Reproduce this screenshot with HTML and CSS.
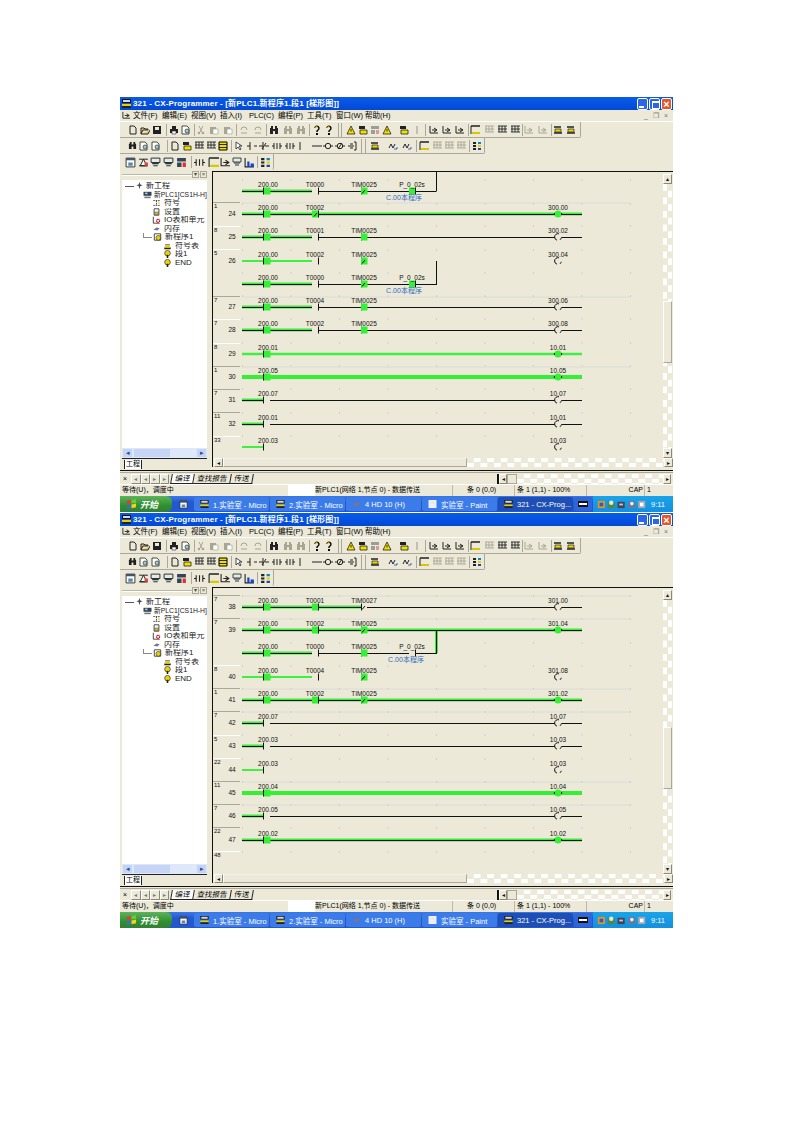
FILE: index.html
```html
<!DOCTYPE html>
<html lang="zh">
<head>
<meta charset="utf-8">
<title>CX-Programmer</title>
<link rel="stylesheet" href="styles.css">
</head>
<body>
<svg class="defs" xmlns="http://www.w3.org/2000/svg">
  <symbol id="doc" viewBox="0 0 10 10"><path d="M2 1h4l2 2v6H2z" fill="none" stroke="currentColor"/></symbol>
  <symbol id="open" viewBox="0 0 10 10"><path d="M1 9V3h3l1 1h3v1H3L1 9h7l2-4" fill="#e8d070" stroke="currentColor"/></symbol>
  <symbol id="disk" viewBox="0 0 10 10"><path d="M1 1h8v8H1z" fill="currentColor"/><path d="M3 2h4v3H3z" fill="#ece9d8"/></symbol>
  <symbol id="print" viewBox="0 0 10 10"><path d="M3 1h4v3H3zM1 4h8v4H1z" fill="currentColor"/><path d="M3 6h4v3H3z" fill="#fff" stroke="currentColor" stroke-width=".6"/></symbol>
  <symbol id="prev" viewBox="0 0 10 10"><path d="M1 1h5l2 2v6H1z" fill="#fff" stroke="currentColor" stroke-width=".8"/><circle cx="6" cy="6" r="2" fill="#9cc" stroke="#333" stroke-width=".7"/></symbol>
  <symbol id="cut" viewBox="0 0 10 10"><path d="M3 1l3 6M7 1L4 7" fill="none" stroke="currentColor"/><circle cx="3" cy="8" r="1.3" fill="currentColor"/><circle cx="7" cy="8" r="1.3" fill="currentColor"/></symbol>
  <symbol id="paste" viewBox="0 0 10 10"><path d="M1 2h6v7H1z" fill="currentColor"/><path d="M4 4h5v5H4z" fill="#fff" stroke="currentColor" stroke-width=".7"/></symbol>
  <symbol id="undo" viewBox="0 0 10 10"><path d="M2 8h6M2 5a3 3 0 0 1 6 0" fill="none" stroke="currentColor"/></symbol>
  <symbol id="bino" viewBox="0 0 10 10"><path d="M1 3h3v6H1zM6 3h3v6H6zM2 1h2v2H2zM6 1h2v2H6zM4 4h2v2H4z" fill="currentColor"/></symbol>
  <symbol id="help" viewBox="0 0 10 10"><path d="M3 3a2 2 0 1 1 3 2L5 6v1" fill="none" stroke="#000" stroke-width="1.4"/><path d="M3 2.5a2 2 0 0 1 3 0" fill="none" stroke="#e8d800"/><path d="M4 8h2v2H4z"/></symbol>
  <symbol id="warn" viewBox="0 0 10 10"><path d="M5 1l4 8H1z" fill="#f0e000" stroke="#222" stroke-width=".8"/><path d="M4.6 4h.8v2.5h-.8z"/></symbol>
  <symbol id="ychk" viewBox="0 0 10 10"><path d="M1 1h6v3H1z" fill="currentColor"/><path d="M2 5h7v4H2z" fill="#f0e000" stroke="#222" stroke-width=".8"/></symbol>
  <symbol id="lad" viewBox="0 0 10 10"><path d="M1 1v7h8M3 5h5M5 3l3 2-3 2" fill="none" stroke="currentColor"/></symbol>
  <symbol id="tab" viewBox="0 0 10 10"><path d="M1 1h9M1 4h9M1 7h9M2 1v6M5 1v6M8 1v6" fill="none" stroke="currentColor" stroke-width=".9"/></symbol>
  <symbol id="tabY" viewBox="0 0 10 10"><path d="M1 1h9" stroke="#222" stroke-width="1.4"/><path d="M1 1v8" stroke="#222"/><path d="M2 8h8" stroke="#d8c800" stroke-width="2"/></symbol>
  <symbol id="sel" viewBox="0 0 10 10"><path d="M1 1h8v8H1z" fill="#f0e000" stroke="#000"/><path d="M1 3.500h8M1 6.500h8" stroke="#000" stroke-width=".8"/></symbol>
  <symbol id="point" viewBox="0 0 10 10"><path d="M2 1v7l2-2 2 3 1-1-2-3h3z" fill="#fff" stroke="#222" stroke-width=".8"/></symbol>
  <symbol id="no" viewBox="0 0 10 10"><path d="M0 5h3M7 5h3M3 1v8" stroke="#222" fill="none"/></symbol>
  <symbol id="nc" viewBox="0 0 10 10"><path d="M0 5h4M6 5h4M4 1v8M7 2L3 8" stroke="#222" fill="none"/></symbol>
  <symbol id="or" viewBox="0 0 10 10"><path d="M0 5h2M8 5h2M2 2v6M5 2v6M8 2v6" stroke="#222" fill="none"/></symbol>
  <symbol id="vert" viewBox="0 0 10 10"><path d="M5 1v8" stroke="#222"/></symbol>
  <symbol id="horz" viewBox="0 0 10 10"><path d="M0 5h10" stroke="#222"/></symbol>
  <symbol id="coil" viewBox="0 0 10 10"><path d="M0 5h2M8 5h2" stroke="#222"/><circle cx="5" cy="5" r="2.700" fill="none" stroke="#222"/></symbol>
  <symbol id="coiln" viewBox="0 0 10 10"><path d="M0 5h2M8 5h2M3 8l4-6" stroke="#222"/><circle cx="5" cy="5" r="2.700" fill="none" stroke="#222"/></symbol>
  <symbol id="inst" viewBox="0 0 10 10"><path d="M7 1h2v8H7M1 5h6M3 3h3M3 7h3" fill="none" stroke="#222"/></symbol>
  <symbol id="run" viewBox="0 0 10 10"><path d="M1 2h7M1 8h8" stroke="#222" stroke-width="1.300"/><path d="M2 4h6v3H2z" fill="#e8d800" stroke="#222" stroke-width=".7"/></symbol>
  <symbol id="wave" viewBox="0 0 10 10"><path d="M1 7l2-4 2 4 2-4" fill="none" stroke="#223"/><path d="M6 8h3V6" stroke="#36c" fill="none"/></symbol>
  <symbol id="grid" viewBox="0 0 10 10"><path d="M1 1h3v2H1zM1 4h3v2H1zM1 7h3v2H1z" fill="#222"/><path d="M6 1h3v2H6z" fill="#08c"/><path d="M6 4h3v2H6z" fill="#e8d000"/><path d="M6 7h3v2H6z" fill="#24a"/></symbol>
  <symbol id="win" viewBox="0 0 10 10"><path d="M1 1h8v8H1z" fill="#fff" stroke="#222" stroke-width=".8"/><path d="M1 1h8v2H1z" fill="#456"/><path d="M3 5h4v3H3z" fill="#58a"/></symbol>
  <symbol id="win2" viewBox="0 0 10 10"><path d="M1 2h8M1 8h8M5 2L2 8h6z" fill="#fff" stroke="#222" stroke-width=".9"/><path d="M6 5h3v3H6z" fill="#d44"/></symbol>
  <symbol id="win3" viewBox="0 0 10 10"><path d="M1 1h8v4H1z" fill="#ece9d8" stroke="#234" stroke-width=".9"/><path d="M2 6h6M3 8h4" stroke="#234"/></symbol>
  <symbol id="gear" viewBox="0 0 10 10"><path d="M1 1h8v3H1zM1 5h4v4H1z" fill="#345"/><path d="M6 5h3v4H6z" fill="#d33"/></symbol>
  <symbol id="chart" viewBox="0 0 10 10"><path d="M1 1v8h8" stroke="#222" fill="none"/><path d="M3 4h2v5H3zM6 6h3v3H6z" fill="#14c"/></symbol>

  <symbol id="tbar1">
    <use href="#doc" x="8" y="3" width="10" height="10" class="ink"/><use href="#open" x="20" y="3" width="10" height="10" class="ink"/><use href="#disk" x="32" y="3" width="10" height="10" class="ink"/>
    <rect x="46" y="2" width="1" height="12" class="sep"/>
    <use href="#print" x="49" y="3" width="10" height="10" class="ink"/><use href="#prev" x="61" y="3" width="10" height="10" class="ink"/>
    <rect x="74" y="2" width="1" height="12" class="sep"/>
    <use href="#cut" x="76" y="3" width="10" height="10" class="dim"/><use href="#paste" x="89" y="3" width="10" height="10" class="dim"/><use href="#paste" x="103" y="3" width="10" height="10" class="dim"/>
    <rect x="116" y="2" width="1" height="12" class="sep"/>
    <use href="#undo" x="119" y="3" width="10" height="10" class="dim"/><use href="#undo" x="133" y="3" width="10" height="10" class="dim"/>
    <rect x="146" y="2" width="1" height="12" class="sep"/>
    <use href="#bino" x="149" y="3" width="10" height="10" class="ink"/><use href="#bino" x="163" y="3" width="10" height="10" class="dim"/><use href="#bino" x="176" y="3" width="10" height="10" class="dim"/>
    <rect x="189" y="2" width="1" height="12" class="sep"/>
    <use href="#help" x="192" y="3" width="10" height="10"/><use href="#help" x="204" y="3" width="10" height="10"/>
    <rect x="218" y="1" width="1" height="14" class="sep"/><rect x="221" y="1" width="1" height="14" class="sep"/>
    <use href="#warn" x="226" y="3" width="10" height="10"/><use href="#ychk" x="238" y="3" width="10" height="10" class="ink"/><use href="#gear" x="250" y="3" width="10" height="10" class="faint"/><use href="#warn" x="262" y="3" width="10" height="10"/>
    <use href="#ychk" x="279" y="3" width="10" height="10" class="ink"/><use href="#vert" x="292" y="3" width="10" height="10" class="dimstroke"/>
    <rect x="305" y="2" width="1" height="12" class="sep"/>
    <use href="#lad" x="309" y="3" width="10" height="10" class="ink"/><use href="#lad" x="322" y="3" width="10" height="10" class="ink"/><use href="#lad" x="335" y="3" width="10" height="10" class="ink"/>
    <rect x="348" y="2" width="1" height="12" class="sep"/>
    <use href="#tabY" x="350" y="3" width="10" height="10"/><use href="#tab" x="364" y="3" width="10" height="10" class="dim"/><use href="#tab" x="377" y="3" width="10" height="10" class="ink"/><use href="#tab" x="390" y="3" width="10" height="10" class="ink"/>
    <rect x="402" y="2" width="1" height="12" class="sep"/>
    <use href="#lad" x="404" y="3" width="10" height="10" class="dim"/><use href="#lad" x="418" y="3" width="10" height="10" class="dim"/>
    <rect x="431" y="2" width="1" height="12" class="sep"/>
    <use href="#run" x="433" y="3" width="10" height="10"/><use href="#run" x="446" y="3" width="10" height="10"/>
  </symbol>
  <symbol id="tbar2">
    <use href="#bino" x="8" y="3" width="9" height="9" class="ink"/><use href="#prev" x="19" y="3" width="10" height="10" class="ink"/><use href="#prev" x="31" y="3" width="10" height="10" class="ink"/>
    <rect x="47" y="2" width="1" height="12" class="sep"/>
    <use href="#doc" x="50" y="3" width="10" height="10" class="ink"/><use href="#ychk" x="62" y="3" width="10" height="10" class="ink"/><use href="#tab" x="74" y="3" width="10" height="10" class="ink"/><use href="#tab" x="86" y="3" width="10" height="10" class="ink"/><use href="#sel" x="98" y="3" width="10" height="10"/>
    <rect x="111" y="2" width="1" height="12" class="sep"/>
    <use href="#point" x="114" y="3" width="10" height="10"/><use href="#no" x="127" y="3" width="10" height="10"/><use href="#nc" x="139" y="3" width="10" height="10"/><use href="#or" x="152" y="3" width="10" height="10"/><use href="#or" x="165" y="3" width="10" height="10"/><use href="#vert" x="175" y="3" width="10" height="10"/><use href="#horz" x="192" y="3" width="10" height="10"/><use href="#coil" x="203" y="3" width="10" height="10"/><use href="#coiln" x="215" y="3" width="10" height="10"/><use href="#inst" x="227" y="3" width="10" height="10"/>
    <rect x="241" y="1" width="1" height="14" class="sep"/><rect x="245" y="1" width="1" height="14" class="sep"/>
    <use href="#run" x="250" y="3" width="10" height="10"/><use href="#wave" x="268" y="3" width="10" height="10"/><use href="#wave" x="282" y="3" width="10" height="10"/>
    <rect x="296" y="2" width="1" height="12" class="sep"/>
    <use href="#tabY" x="299" y="3" width="10" height="10"/><use href="#tab" x="312" y="3" width="10" height="10" class="dim"/><use href="#tab" x="324" y="3" width="10" height="10" class="dim"/><use href="#tab" x="336" y="3" width="10" height="10" class="dim"/>
    <rect x="349" y="2" width="1" height="12" class="sep"/>
    <use href="#grid" x="352" y="3" width="10" height="10"/>
  </symbol>
  <symbol id="tbar3">
    <use href="#win" x="5" y="3" width="11" height="11"/><use href="#win2" x="18" y="3" width="11" height="11"/><use href="#win3" x="30" y="3" width="11" height="11"/><use href="#win3" x="43" y="3" width="11" height="11"/><use href="#gear" x="56" y="3" width="11" height="11"/>
    <rect x="71" y="2" width="1" height="12" class="sep"/>
    <use href="#or" x="74" y="3" width="11" height="11"/><use href="#tabY" x="88" y="3" width="11" height="11"/><use href="#lad" x="100" y="3" width="11" height="11" class="ink"/><use href="#win3" x="112" y="3" width="10" height="10"/><use href="#chart" x="124" y="3" width="11" height="11"/>
    <rect x="137" y="2" width="1" height="12" class="sep"/>
    <use href="#grid" x="140" y="3" width="11" height="11"/>
  </symbol>

  <symbol id="appicon" viewBox="0 0 11 11"><path d="M1 1h9v4H1z" fill="#111"/><path d="M2 2h7v2H2z" fill="#d8d8d8"/><path d="M1 6h9v2H1z" fill="#e8d000"/><path d="M1 8h9v2H1z" fill="#222"/></symbol>
  <symbol id="t-root" viewBox="0 0 10 10"><path d="M5 0l1 3 3 1-3 1-1 4-1-4-3-1 3-1z" fill="#444"/></symbol>
  <symbol id="t-plc" viewBox="0 0 10 10"><path d="M0 1h10v5H0z" fill="#345"/><path d="M1 7h8v2H1z" fill="#777"/><path d="M2 2h3v2H2z" fill="#bcd"/></symbol>
  <symbol id="t-sym" viewBox="0 0 10 10"><path d="M1 2h8M1 8h8M5 2v6" stroke="#222" stroke-dasharray="2 1"/><path d="M7 4h2v2H7z" fill="#e8d000"/></symbol>
  <symbol id="t-set" viewBox="0 0 10 10"><path d="M2 1h6v8H2z" fill="none" stroke="#222"/><path d="M3 5h4v3H3z" fill="#e8d000" stroke="#222" stroke-width=".5"/></symbol>
  <symbol id="t-io" viewBox="0 0 10 10"><path d="M1 1v8h8" stroke="#222" fill="none"/><circle cx="7" cy="6" r="2" fill="none" stroke="#d00" stroke-width="1.200"/></symbol>
  <symbol id="t-mem" viewBox="0 0 10 10"><path d="M1 6l4-3 4 1-3 3z" fill="#778"/></symbol>
  <symbol id="t-prog" viewBox="0 0 10 10"><path d="M1 1h8v8H1z" fill="#fff" stroke="#222"/><circle cx="6" cy="6" r="3" fill="#e8d000" stroke="#222" stroke-width=".7"/></symbol>
  <symbol id="t-tbl" viewBox="0 0 10 10"><path d="M2 3h6v1H2zM1 7h8v2H1z" fill="#222"/><path d="M2 4h6v3H2z" fill="#e8d000"/></symbol>
  <symbol id="t-sec" viewBox="0 0 10 10"><circle cx="5" cy="4" r="3.500" fill="#e8d800" stroke="#222" stroke-width=".8"/><path d="M4 6h2v4H4z" fill="#222"/></symbol>
  <symbol id="flag" viewBox="0 0 12 12"><path d="M1 2l4-1v4l-4 1z" fill="#e33"/><path d="M6 1l5-1v4l-5 1z" fill="#6c3"/><path d="M1 7l4-1v4l-4 1z" fill="#27d"/><path d="M6 6l5-1v4l-5 1z" fill="#fc2"/></symbol>
  <symbol id="tray" viewBox="0 0 58 12">
    <path d="M2 2h8v8H2z" fill="#e89020"/><path d="M4 4h4v4H4z" fill="#2060d0"/><path d="M13 3h8v7h-8z" fill="#4a8a4a"/><circle cx="17" cy="4" r="2.500" fill="#e4e4e4"/><path d="M24 3h8v7h-8z" fill="#445"/><path d="M26 5h4v2h-4z" fill="#c8c8e8"/><circle cx="40" cy="6" r="4" fill="#778"/><circle cx="40" cy="5" r="2" fill="#eee"/><path d="M47 2h8v8h-8z" fill="#a8a8b0"/><path d="M49 4h4v4h-4z" fill="#fff"/>
  </symbol>
  <g id="c"><rect x="0" y="-3.500" width="1" height="7" class="kf"/></g>
  <g id="s"><rect x="0" y="-3.500" width="6.500" height="7" class="gf"/></g>
  <g id="on"><circle r="3.600" class="gf"/><path d="M-3.600 -1v2M3.600 -1v2" class="k"/></g>
  <g id="off"><circle r="3.400" fill="#ece9d8"/><path d="M1 -3.200A3.400 3.400 0 0 0 -3.400 0A3.400 3.400 0 0 0 -1 3.200M2 2.800A3.400 3.400 0 0 0 3.300 .8" fill="none" stroke="#111"/></g>
  <g id="sl"><path d="M0 2.500l3-3.500" class="k"/></g>
</svg>

<main class="page">
  <section class="window">
    <header class="title"><svg class="ticon"><use href="#appicon"/></svg><span class="ttext">321 - CX-Programmer - [新PLC1.新程序1.段1 [梯形图]]</span><span class="wbtns"><i class="wb min"></i><i class="wb max"></i><i class="wb close"></i></span></header>
    <nav class="menu"><svg class="micon"><use href="#lad" class="ink"/></svg><span class="m">文件(F)</span><span class="m">编辑(E)</span><span class="m">视图(V)</span><span class="m">插入(I)</span><span class="m">PLC(C)</span><span class="m">编程(P)</span><span class="m">工具(T)</span><span class="m">窗口(W)</span><span class="m">帮助(H)</span><span class="mbtns"><i class="mb">_</i><i class="mb">❐</i><i class="mb">×</i></span></nav>
    <div class="tb"><svg class="tb1"><use href="#tbar1"/></svg></div>
    <div class="tb"><svg class="tb2"><use href="#tbar2"/></svg></div>
    <div class="tb last"><svg class="tb3"><use href="#tbar3"/></svg></div>
    <div class="body">
      <aside class="side">
        <div class="sidehead"><i class="sb">▾</i><i class="sb">×</i></div>
        <ul class="tree">
          <li class="t0"><svg class="ti"><use href="#t-root"/></svg>新工程</li>
          <li class="t1"><svg class="ti"><use href="#t-plc"/></svg>新PLC1[CS1H-H]</li>
          <li class="t2"><svg class="ti"><use href="#t-sym"/></svg>符号</li>
          <li class="t2"><svg class="ti"><use href="#t-set"/></svg>设置</li>
          <li class="t2"><svg class="ti"><use href="#t-io"/></svg>IO表和单元</li>
          <li class="t2"><svg class="ti"><use href="#t-mem"/></svg>内存</li>
          <li class="t2 br"><svg class="ti"><use href="#t-prog"/></svg>新程序1</li>
          <li class="t3"><svg class="ti"><use href="#t-tbl"/></svg>符号表</li>
          <li class="t3"><svg class="ti"><use href="#t-sec"/></svg>段1</li>
          <li class="t3"><svg class="ti"><use href="#t-sec"/></svg>END</li>
        </ul>
        <div class="tscroll"><i class="ta">◂</i><i class="tt"></i><i class="ta end">▸</i></div>
        <div class="stab"><span class="stabin">工程</span></div>
      </aside>
      <div class="main">
        <div class="mainrow">
          <svg class="ladder" viewBox="213 172 450 286">
            <g class="gutter">
              <path d="M213 202.500h27M213 296.500h27M213 366.500h27M213 389.500h27M213 412.500h27" class="lineg"/>
              <path d="M213 226.500h27M213 249.500h27M213 319.500h27M213 343.500h27M213 436.500h27" class="linew"/>
              <path d="M242 203h389M242 297h389M242 367h389" class="linel"/>
              <path d="M242 180h389M242 204h389M242 226h389M242 250h389M242 273h389M242 296h389M242 319h389M242 343h389M242 366h389M242 389h389M242 413h389M242 436h389" class="ticks"/>
              <text x="232" y="216">24</text><text x="232" y="239">25</text><text x="232" y="263">26</text><text x="232" y="309">27</text><text x="232" y="332">28</text><text x="232" y="356">29</text><text x="232" y="379">30</text><text x="232" y="402">31</text><text x="232" y="426">32</text>
              <text x="214" y="208" class="st">1</text><text x="214" y="232" class="st">8</text><text x="214" y="255" class="st">5</text><text x="214" y="302" class="st">7</text><text x="214" y="325" class="st">7</text><text x="214" y="349" class="st">8</text><text x="214" y="372" class="st">1</text><text x="214" y="395" class="st">7</text><text x="214" y="418" class="st">11</text><text x="214" y="442" class="st">33</text>
            </g>
            <path d="M436.500 172v19" class="k"/>
            <path d="M242 191h70M242 214h340M242 237h70M242 284h70M242 307h70M242 330h70" class="g3"/>
            <path d="M242 261h70" class="g2"/><path d="M242 354h340" class="g25"/><path d="M242 377h340" class="g4"/>
            <path d="M242 400h21M242 424h21" class="g3"/><path d="M242 447h21" class="g2"/>
            <path d="M242 191.500h70M318 191.500h118.500M242 214.500h340M242 237.500h70M318 237.500h264M242 284.500h70M318 284.500h119M242 307.500h70M318 307.500h264M242 330.500h70M318 330.500h264M242 400.500h21M270 400.500h312M242 424.500h21M270 424.500h312M436.500 261v24" class="k"/>
            <use href="#c" x="263" y="191"/><use href="#s" x="264" y="191"/><use href="#c" x="318" y="191"/><use href="#c" x="361" y="191"/><use href="#s" x="361" y="191"/><use href="#sl" x="362" y="191"/><use href="#s" x="409" y="191"/><use href="#c" x="415" y="191"/>
            <use href="#c" x="263" y="214"/><use href="#s" x="264" y="214"/><use href="#s" x="312" y="214"/><use href="#sl" x="314" y="214"/><use href="#c" x="318" y="214"/><use href="#on" x="558" y="214"/>
            <use href="#c" x="263" y="237"/><use href="#s" x="264" y="237"/><use href="#c" x="318" y="237"/><use href="#c" x="361" y="237"/><use href="#s" x="361" y="237"/><use href="#off" x="558" y="237"/>
            <use href="#c" x="263" y="261"/><use href="#s" x="264" y="261"/><use href="#c" x="318" y="261"/><use href="#c" x="361" y="261"/><use href="#s" x="361" y="261"/><use href="#sl" x="362" y="261"/><use href="#off" x="558" y="261"/>
            <use href="#c" x="263" y="284"/><use href="#s" x="264" y="284"/><use href="#c" x="318" y="284"/><use href="#c" x="361" y="284"/><use href="#s" x="361" y="284"/><use href="#sl" x="362" y="284"/><use href="#s" x="409" y="284"/><use href="#c" x="415" y="284"/>
            <use href="#c" x="263" y="307"/><use href="#s" x="264" y="307"/><use href="#c" x="318" y="307"/><use href="#c" x="361" y="307"/><use href="#s" x="361" y="307"/><use href="#off" x="558" y="307"/>
            <use href="#c" x="263" y="330"/><use href="#s" x="264" y="330"/><use href="#c" x="318" y="330"/><use href="#c" x="361" y="330"/><use href="#s" x="361" y="330"/><use href="#off" x="558" y="330"/>
            <use href="#c" x="263" y="354"/><use href="#s" x="264" y="354"/><use href="#on" x="558" y="354"/>
            <use href="#c" x="263" y="377"/><use href="#s" x="264" y="377"/><use href="#on" x="558" y="377"/>
            <use href="#c" x="263" y="400"/><use href="#off" x="558" y="400"/>
            <use href="#c" x="263" y="424"/><use href="#off" x="558" y="424"/>
            <use href="#c" x="263" y="447"/><use href="#off" x="558" y="447"/>
            <g class="lb">
              <text x="268" y="187">200.00</text><text x="315" y="187">T0000</text><text x="364" y="187">TIM0025</text><text x="412" y="187">P_0_02s</text>
              <text x="268" y="210">200.00</text><text x="315" y="210">T0002</text><text x="558" y="210">300.00</text>
              <text x="268" y="233">200.00</text><text x="315" y="233">T0001</text><text x="364" y="233">TIM0025</text><text x="558" y="233">300.02</text>
              <text x="268" y="257">200.00</text><text x="315" y="257">T0002</text><text x="364" y="257">TIM0025</text><text x="558" y="257">300.04</text>
              <text x="268" y="280">200.00</text><text x="315" y="280">T0000</text><text x="364" y="280">TIM0025</text><text x="412" y="280">P_0_02s</text>
              <text x="268" y="303">200.00</text><text x="315" y="303">T0004</text><text x="364" y="303">TIM0025</text><text x="558" y="303">300.06</text>
              <text x="268" y="326">200.00</text><text x="315" y="326">T0002</text><text x="364" y="326">TIM0025</text><text x="558" y="326">300.08</text>
              <text x="268" y="350">200.01</text><text x="558" y="350">10.01</text>
              <text x="268" y="373">200.05</text><text x="558" y="373">10.05</text>
              <text x="268" y="396">200.07</text><text x="558" y="396">10.07</text>
              <text x="268" y="420">200.01</text><text x="558" y="420">10.01</text>
              <text x="268" y="443">200.03</text><text x="558" y="443">10.03</text>
            </g>
            <text x="404" y="200" class="cm">C.00本程序</text><text x="404" y="293" class="cm">C.00本程序</text>
          </svg>
          <div class="vs"><i class="sbtn">▴</i><div class="vtrack v1"><i class="vthumb"></i></div><i class="sbtn">▾</i></div>
        </div>
        <div class="hs"><i class="sbtn">◂</i><i class="hthumb"></i><div class="check"></div><i class="sbtn">▸</i></div>
      </div>
    </div>
    <div class="output"><span class="ox">×</span><span class="onav"><i class="ob">◂</i><i class="ob">◂</i><i class="ob">▸</i><i class="ob">▸</i></span><span class="otabs"><b class="otab act">编译</b><b class="otab">查找报告</b><b class="otab">传送</b></span><span class="oscroll"><i class="sbtn">◂</i><i class="othumb"></i><div class="check"></div><i class="sbtn">▸</i></span></div>
    <footer class="status"><span class="s0">等待(U)，调度中</span><span class="s1">新PLC1(网络 1,节点 0) - 数据传送</span><span class="s2">条 0 (0,0)</span><span class="s3">条 1 (1,1) - 100%</span><span class="s4">CAP</span><span class="s5">1</span></footer>
    <div class="taskbar"><span class="start"><svg class="flag"><use href="#flag"/></svg>开始</span><span class="ql"><svg class="qli"><use href="#win"/></svg></span><span class="tk"><svg class="tki"><use href="#appicon"/></svg>1.实验室 - Micro</span><span class="tk"><svg class="tki"><use href="#appicon"/></svg>2.实验室 - Micro</span><span class="tk"><svg class="tki"><use href="#t-mem"/></svg>4 HD 10 (H)</span><span class="tk"><svg class="tki"><use href="#disk"/></svg>实验室 - Paint</span><span class="tk act"><svg class="tki"><use href="#appicon"/></svg>321 - CX-Prog...</span><span class="tk small"><i class="tkbox"></i></span><span class="trayb"><svg class="tri"><use href="#tray"/></svg><span class="clock">9:11</span></span></div>
  </section>

  <section class="window">
    <header class="title"><svg class="ticon"><use href="#appicon"/></svg><span class="ttext">321 - CX-Programmer - [新PLC1.新程序1.段1 [梯形图]]</span><span class="wbtns"><i class="wb min"></i><i class="wb max"></i><i class="wb close"></i></span></header>
    <nav class="menu"><svg class="micon"><use href="#lad" class="ink"/></svg><span class="m">文件(F)</span><span class="m">编辑(E)</span><span class="m">视图(V)</span><span class="m">插入(I)</span><span class="m">PLC(C)</span><span class="m">编程(P)</span><span class="m">工具(T)</span><span class="m">窗口(W)</span><span class="m">帮助(H)</span><span class="mbtns"><i class="mb">_</i><i class="mb">❐</i><i class="mb">×</i></span></nav>
    <div class="tb"><svg class="tb1"><use href="#tbar1"/></svg></div>
    <div class="tb"><svg class="tb2"><use href="#tbar2"/></svg></div>
    <div class="tb last"><svg class="tb3"><use href="#tbar3"/></svg></div>
    <div class="body">
      <aside class="side">
        <div class="sidehead"><i class="sb">▾</i><i class="sb">×</i></div>
        <ul class="tree">
          <li class="t0"><svg class="ti"><use href="#t-root"/></svg>新工程</li>
          <li class="t1"><svg class="ti"><use href="#t-plc"/></svg>新PLC1[CS1H-H]</li>
          <li class="t2"><svg class="ti"><use href="#t-sym"/></svg>符号</li>
          <li class="t2"><svg class="ti"><use href="#t-set"/></svg>设置</li>
          <li class="t2"><svg class="ti"><use href="#t-io"/></svg>IO表和单元</li>
          <li class="t2"><svg class="ti"><use href="#t-mem"/></svg>内存</li>
          <li class="t2 br"><svg class="ti"><use href="#t-prog"/></svg>新程序1</li>
          <li class="t3"><svg class="ti"><use href="#t-tbl"/></svg>符号表</li>
          <li class="t3"><svg class="ti"><use href="#t-sec"/></svg>段1</li>
          <li class="t3"><svg class="ti"><use href="#t-sec"/></svg>END</li>
        </ul>
        <div class="tscroll"><i class="ta">◂</i><i class="tt"></i><i class="ta end">▸</i></div>
        <div class="stab"><span class="stabin">工程</span></div>
      </aside>
      <div class="main">
        <div class="mainrow">
          <svg class="ladder" viewBox="213 172 450 286">
            <g class="gutter">
              <path d="M213 179.500h27M213 202.500h27M213 272.500h27M213 295.500h27M213 365.500h27M213 388.500h27M213 411.500h27" class="lineg"/>
              <path d="M213 249.500h27M213 319.500h27M213 342.500h27M213 435.500h27" class="linew"/>
              <path d="M242 180h389M242 203h389M242 273h389M242 296h389M242 366h389M242 389h389" class="linel"/>
              <path d="M242 180h389M242 203h389M242 227h389M242 250h389M242 273h389M242 296h389M242 319h389M242 343h389M242 366h389M242 389h389M242 412h389M242 436h389" class="ticks"/>
              <text x="232" y="193">38</text><text x="232" y="216">39</text><text x="232" y="263">40</text><text x="232" y="286">41</text><text x="232" y="309">42</text><text x="232" y="332">43</text><text x="232" y="356">44</text><text x="232" y="379">45</text><text x="232" y="402">46</text><text x="232" y="426">47</text>
              <text x="214" y="185" class="st">7</text><text x="214" y="208" class="st">7</text><text x="214" y="255" class="st">8</text><text x="214" y="278" class="st">1</text><text x="214" y="301" class="st">7</text><text x="214" y="325" class="st">5</text><text x="214" y="348" class="st">22</text><text x="214" y="371" class="st">11</text><text x="214" y="394" class="st">7</text><text x="214" y="417" class="st">22</text><text x="214" y="441" class="st">48</text>
            </g>
            <path d="M242 191h119M242 214h340M436.500 214v23M242 237h70M242 284h340M242 307h21M242 330h21M242 400h21M242 424h340" class="g3"/>
            <path d="M242 261h70M242 354h21" class="g2"/><path d="M242 377h340" class="g4"/>
            <path d="M242 191.500h119M367 191.500h215M242 214.500h340M436.500 214v23M242 237.500h70M318 237.500h91M415 237.500h22M242 284.500h340M242 307.500h21M270 307.500h312M242 330.500h21M270 330.500h312M242 400.500h21M270 400.500h312M242 424.500h340" class="k"/>
            <use href="#c" x="263" y="191"/><use href="#s" x="264" y="191"/><use href="#s" x="312" y="191"/><use href="#c" x="318" y="191"/><use href="#c" x="361" y="191"/><use href="#sl" x="362" y="191"/><use href="#off" x="558" y="191"/>
            <use href="#c" x="263" y="214"/><use href="#s" x="264" y="214"/><use href="#s" x="312" y="214"/><use href="#c" x="318" y="214"/><use href="#c" x="361" y="214"/><use href="#s" x="361" y="214"/><use href="#sl" x="362" y="214"/><use href="#on" x="558" y="214"/>
            <use href="#c" x="263" y="237"/><use href="#s" x="264" y="237"/><use href="#c" x="318" y="237"/><use href="#c" x="361" y="237"/><use href="#s" x="361" y="237"/><use href="#c" x="415" y="237"/>
            <use href="#c" x="263" y="261"/><use href="#s" x="264" y="261"/><use href="#c" x="318" y="261"/><use href="#c" x="361" y="261"/><use href="#s" x="361" y="261"/><use href="#sl" x="362" y="261"/><use href="#off" x="558" y="261"/>
            <use href="#c" x="263" y="284"/><use href="#s" x="264" y="284"/><use href="#s" x="312" y="284"/><use href="#c" x="318" y="284"/><use href="#c" x="361" y="284"/><use href="#s" x="361" y="284"/><use href="#sl" x="362" y="284"/><use href="#on" x="558" y="284"/>
            <use href="#c" x="263" y="307"/><use href="#off" x="558" y="307"/>
            <use href="#c" x="263" y="330"/><use href="#off" x="558" y="330"/>
            <use href="#c" x="263" y="354"/><use href="#off" x="558" y="354"/>
            <use href="#c" x="263" y="377"/><use href="#s" x="264" y="377"/><use href="#on" x="558" y="377"/>
            <use href="#c" x="263" y="400"/><use href="#off" x="558" y="400"/>
            <use href="#c" x="263" y="424"/><use href="#s" x="264" y="424"/><use href="#on" x="558" y="424"/>
            <g class="lb">
              <text x="268" y="187">200.00</text><text x="315" y="187">T0001</text><text x="364" y="187">TIM0027</text><text x="558" y="187">301.00</text>
              <text x="268" y="210">200.00</text><text x="315" y="210">T0002</text><text x="364" y="210">TIM0025</text><text x="558" y="210">301.04</text>
              <text x="268" y="233">200.00</text><text x="315" y="233">T0000</text><text x="364" y="233">TIM0025</text><text x="412" y="233">P_0_02s</text>
              <text x="268" y="257">200.00</text><text x="315" y="257">T0004</text><text x="364" y="257">TIM0025</text><text x="558" y="257">301.08</text>
              <text x="268" y="280">200.00</text><text x="315" y="280">T0002</text><text x="364" y="280">TIM0025</text><text x="558" y="280">301.02</text>
              <text x="268" y="303">200.07</text><text x="558" y="303">10.07</text>
              <text x="268" y="326">200.03</text><text x="558" y="326">10.03</text>
              <text x="268" y="350">200.03</text><text x="558" y="350">10.03</text>
              <text x="268" y="373">200.04</text><text x="558" y="373">10.04</text>
              <text x="268" y="396">200.05</text><text x="558" y="396">10.05</text>
              <text x="268" y="420">200.02</text><text x="558" y="420">10.02</text>
            </g>
            <text x="406" y="246" class="cm">C.00本程序</text>
          </svg>
          <div class="vs"><i class="sbtn">▴</i><div class="vtrack v2"><i class="vthumb"></i></div><i class="sbtn">▾</i></div>
        </div>
        <div class="hs"><i class="sbtn">◂</i><i class="hthumb"></i><div class="check"></div><i class="sbtn">▸</i></div>
      </div>
    </div>
    <div class="output"><span class="ox">×</span><span class="onav"><i class="ob">◂</i><i class="ob">◂</i><i class="ob">▸</i><i class="ob">▸</i></span><span class="otabs"><b class="otab act">编译</b><b class="otab">查找报告</b><b class="otab">传送</b></span><span class="oscroll"><i class="sbtn">◂</i><i class="othumb"></i><div class="check"></div><i class="sbtn">▸</i></span></div>
    <footer class="status"><span class="s0">等待(U)，调度中</span><span class="s1">新PLC1(网络 1,节点 0) - 数据传送</span><span class="s2">条 0 (0,0)</span><span class="s3">条 1 (1,1) - 100%</span><span class="s4">CAP</span><span class="s5">1</span></footer>
    <div class="taskbar"><span class="start"><svg class="flag"><use href="#flag"/></svg>开始</span><span class="ql"><svg class="qli"><use href="#win"/></svg></span><span class="tk"><svg class="tki"><use href="#appicon"/></svg>1.实验室 - Micro</span><span class="tk"><svg class="tki"><use href="#appicon"/></svg>2.实验室 - Micro</span><span class="tk"><svg class="tki"><use href="#t-mem"/></svg>4 HD 10 (H)</span><span class="tk"><svg class="tki"><use href="#disk"/></svg>实验室 - Paint</span><span class="tk act"><svg class="tki"><use href="#appicon"/></svg>321 - CX-Prog...</span><span class="tk small"><i class="tkbox"></i></span><span class="trayb"><svg class="tri"><use href="#tray"/></svg><span class="clock">9:11</span></span></div>
  </section>
</main>
</body>
</html>
```
FILE: styles.css
```css
* { box-sizing: border-box; }
html, body { margin: 0; padding: 0; background: #fff; }
body { font-family: "Liberation Sans", "Noto Sans CJK SC", sans-serif; font-size: 8px; color: #000; }
i { font-style: normal; }
.defs { display: none; }
.page { width: 793px; height: 1122px; padding: 97px 0 0 120px; }
.window { width: 553px; height: 415px; margin-bottom: 1px; display: flex; flex-direction: column; background: #ece9d8; overflow: hidden; }

.title { height: 13px; flex: none; display: flex; align-items: center; padding: 0 1px; color: #fff; font-weight: 700; font-size: 8px; letter-spacing: .15px; white-space: nowrap; background: linear-gradient(#0a5ae8, #0553e2 50%, #0348d0); }
.ticon { width: 11px; height: 11px; margin-right: 1px; flex: none; }
.ttext { flex: 1; line-height: 13px; }
.wbtns { display: flex; gap: 1px; height: 12px; }
.wb { width: 11px; height: 12px; display: block; border: 1px solid #fff; border-radius: 2px; background: #2b66e6; }
.wb.min::after { content: ""; display: block; width: 5px; height: 2px; margin: 7px 0 0 1px; background: #fff; }
.wb.max::after { content: ""; display: block; width: 6px; height: 5px; margin: 2px 0 0 2px; border: 1px solid #fff; border-top-width: 2px; }
.wb.close { background: #e2582c; }
.wb.close::after { content: "×"; display: block; color: #fff; font-size: 11px; line-height: 10px; text-align: center; }

.menu { height: 12px; flex: none; display: flex; align-items: center; background: #ece9d8; border-bottom: 1px solid #fff; padding-left: 2px; font-size: 7.500px; white-space: nowrap; }
.micon { width: 9px; height: 9px; flex: none; margin-right: 2px; }
.m { width: 29px; flex: none; line-height: 11px; }
.mbtns { margin-left: auto; display: flex; gap: 2px; padding-right: 3px; color: #777; }
.mb { width: 8px; text-align: center; line-height: 10px; font-size: 7px; }

.tb { height: 16px; flex: none; display: flex; background: #ece9d8; }
.tb svg { display: block; height: 16px; border-right: 1px solid #aca899; border-bottom: 1px solid #aca899; border-bottom-right-radius: 2px; box-shadow: 0 1px 0 #fff; }
.tb1 { width: 461px; }
.tb2 { width: 365px; }
.tb3 { width: 154px; }
.tb.last svg { border-bottom: 0; box-shadow: none; }
.ink { color: #222; }
.dim { color: #a9a595; }
.faint { opacity: .45; }
.dimstroke { opacity: .4; }
.sep { fill: #aca899; }

.body { height: 300px; flex: none; display: flex; }
.side { width: 92px; flex: none; display: flex; flex-direction: column; padding: 1px 5px 3px 2px; }
.sidehead { height: 9px; flex: none; display: flex; justify-content: flex-end; gap: 1px; background: linear-gradient(#ece9d8 3px, #bdb9a6 3px, #bdb9a6 4px, #fff 4px, #fff 5px, #ece9d8 5px); }
.sb { width: 7px; height: 7px; border: 1px solid #aca899; background: #ece9d8; font-size: 6px; line-height: 5px; text-align: center; color: #444; }
.tree { flex: 1; margin: 0; padding: 0; list-style: none; background: #fff; font-size: 8px; }
.tree li { height: 8.500px; line-height: 8.500px; display: flex; align-items: center; white-space: nowrap; overflow: hidden; color: #222; }
.ti { width: 9px; height: 8px; flex: none; margin-right: 3px; }
.t0 { padding-left: 3px; margin-top: 2px; }
.t0::before { content: ""; flex: none; width: 9px; height: 1px; margin-right: 1px; background: #555; }
.t0 .ti { margin-right: 2px; }
.t1 { padding-left: 21px; font-size: 6.800px; }
.t1 .ti { margin-right: 2px; }
.t2 { padding-left: 30px; }
.t2.br { padding-left: 21px; }
.t2.br::before { content: ""; flex: none; width: 8px; height: 5px; margin: -5px 1px 0 0; border-left: 1px solid #888; border-bottom: 1px solid #888; }
.t3 { padding-left: 41px; }
.tscroll { height: 10px; flex: none; display: flex; align-items: center; background: #dfe8fb; padding: 1px; }
.ta { width: 9px; height: 8px; background: #c4d4f7; color: #2a4aa0; font-size: 7px; line-height: 7px; text-align: center; }
.tt { width: 36px; height: 8px; background: #c6d5f6; margin-left: 2px; }
.ta.end { margin-left: auto; }
.stab { height: 9px; flex: none; padding-left: 2px; border-top: 1px solid #222; }
.stabin { display: inline-block; width: 18px; height: 9px; line-height: 8px; background: #fff; border-left: 1px solid #222; border-right: 1px solid #222; text-align: center; font-size: 7px; }

.main { flex: 1; display: flex; flex-direction: column; height: 300px; border-top: 1px solid #ece9d8; }
.mainrow { display: flex; height: 287px; border-top: 1px solid #111; border-left: 1px solid #111; }
.ladder { width: 450px; height: 286px; display: block; background: #ece9d8; flex: none; }
.vs { width: 9px; flex: none; display: flex; flex-direction: column; margin-top: 2px; }
.vtrack { flex: 1; background: conic-gradient(#ece9d8 25%, #fff 0 50%, #ece9d8 0 75%, #fff 0) 0 0 / 9px 13.500px; display: flex; flex-direction: column; }
.v1 { padding-top: 117px; }
.v2 { padding-top: 127px; }
.vthumb { display: block; height: 62px; background: #ece9d8; border: 1px solid #aca899; border-left-color: #fff; border-top-color: #fff; }
.sbtn { display: block; width: 9px; height: 10px; flex: none; background: #ece9d8; border: 1px solid #8c8872; border-top-color: #fff; border-left-color: #fff; font-size: 6px; line-height: 8px; text-align: center; color: #111; }
.hs { display: flex; height: 9px; flex: none; padding-left: 1px; border-left: 1px solid #111; }
.hs .sbtn { width: 9px; height: 9px; }
.hthumb { display: block; width: 244px; height: 9px; background: #ece9d8; border: 1px solid #aca899; border-top-color: #f4f2e8; border-left-color: #fff; flex: none; }
.check { flex: 1; background: conic-gradient(#fff 25%, #ece9d8 0 50%, #fff 0 75%, #ece9d8 0) 0 0 / 13.500px 9px; }

.output { height: 14px; flex: none; display: flex; align-items: center; border-top: 1px solid #111; box-shadow: inset 0 1px 0 #ece9d8, inset 0 2px 0 #aca899; padding: 2px 2px 0 3px; }
.ox { width: 6px; font-size: 7px; line-height: 10px; }
.onav { display: flex; margin-left: 2px; }
.ob { width: 9.500px; height: 10px; border: 1px solid #8c8872; border-top-color: #fff; border-left-color: #fff; font-size: 6px; line-height: 8px; text-align: center; color: #777; }
.otabs { display: flex; margin-left: 2px; width: 326px; }
.otab { font-weight: 400; font-size: 7.500px; line-height: 9px; padding: 0 3px; border-right: 1px solid #222; border-bottom: 1px solid #222; transform: skewX(-10deg); }
.otab.act { background: #fff; border-left: 1px solid #222; }
.oscroll { flex: 1; display: flex; height: 10px; border-left: 2px solid #111; }
.oscroll .sbtn { height: 10px; width: 8px; }
.othumb { display: block; width: 10px; height: 10px; background: #ece9d8; border: 1px solid #aca899; flex: none; }

.status { height: 12px; flex: none; display: flex; align-items: center; font-size: 7px; white-space: nowrap; border-top: 1px solid #fff; }
.status span { height: 11px; line-height: 10px; overflow: hidden; padding-left: 2px; border-right: 1px solid #bdb9a6; }
.s0 { width: 168px; padding-left: 1px; border-right: 0 !important; }
.s1 { width: 165px; padding-left: 27px !important; background: linear-gradient(90deg, #fff 27px, transparent 27px); }
.s2 { width: 62px; padding-left: 14px !important; }
.s3 { width: 72px; }
.s4 { width: 58px; padding-left: 3px !important; text-align: right; padding-right: 1px; }
.s5 { flex: 1; border-right: 0 !important; }

.taskbar { height: 16px; flex: none; display: flex; gap: 1px; align-items: stretch; background: linear-gradient(#3a78e8, #2458d0 40%, #2458d0); color: #fff; font-size: 7.500px; white-space: nowrap; }
.start { width: 52px; display: flex; align-items: center; gap: 3px; padding-left: 6px; background: linear-gradient(#5cb45c, #2f8f2f 60%, #347f34); border-radius: 0 6px 6px 0; font-size: 9px; font-style: italic; font-weight: 700; flex: none; }
.flag { width: 11px; height: 11px; flex: none; }
.ql { width: 20px; flex: none; display: flex; align-items: center; justify-content: center; }
.qli { width: 9px; height: 9px; }
.tk { width: 75px; flex: none; display: flex; align-items: center; gap: 3px; padding-left: 5px; margin: 1px 0; background: #3b7ce8; border-radius: 2px; overflow: hidden; color: #fff; }
.tki { width: 11px; height: 10px; flex: none; color: #eef; }
.tk.act { background: #1e4fb4; }
.tk.small { width: 18px; background: #2f66d8; padding-left: 4px; }
.tkbox { display: block; width: 10px; height: 6px; background: #fff; border: 2px solid #111; border-width: 2px 1px; }
.trayb { flex: 1; display: flex; align-items: center; background: linear-gradient(#1aa4ea, #1590dc); padding-left: 3px; }
.tri { width: 52px; height: 11px; flex: none; }
.clock { margin-left: 3px; }

.ladder text { font-family: "Liberation Sans", "Noto Sans CJK SC", sans-serif; }
.gutter text { font-size: 6.500px; fill: #111; text-anchor: middle; }
.gutter text.st { text-anchor: start; font-size: 6px; }
.lb text { font-size: 6.500px; fill: #111; text-anchor: middle; }
.cm { font-size: 7px; fill: #2f6cc0; text-anchor: middle; }
.k { stroke: #111; stroke-width: 1; fill: none; }
.kf { fill: #111; }
.gf { fill: #35f035; }
.g2 { stroke: #40f040; stroke-width: 2; fill: none; }
.g25 { stroke: #40f040; stroke-width: 2.500; fill: none; }
.g3 { stroke: #40e840; stroke-width: 3; fill: none; }
.g4 { stroke: #33f033; stroke-width: 4; fill: none; }
.lineg { stroke: #aca899; stroke-width: 1; fill: none; }
.linew { stroke: #fff; stroke-width: 1; fill: none; }
.linel { stroke: #dcdcd8; stroke-width: 1; fill: none; }
.ticks { stroke: #cfcfcf; stroke-width: 2; stroke-dasharray: 1 47.500; fill: none; }
```
